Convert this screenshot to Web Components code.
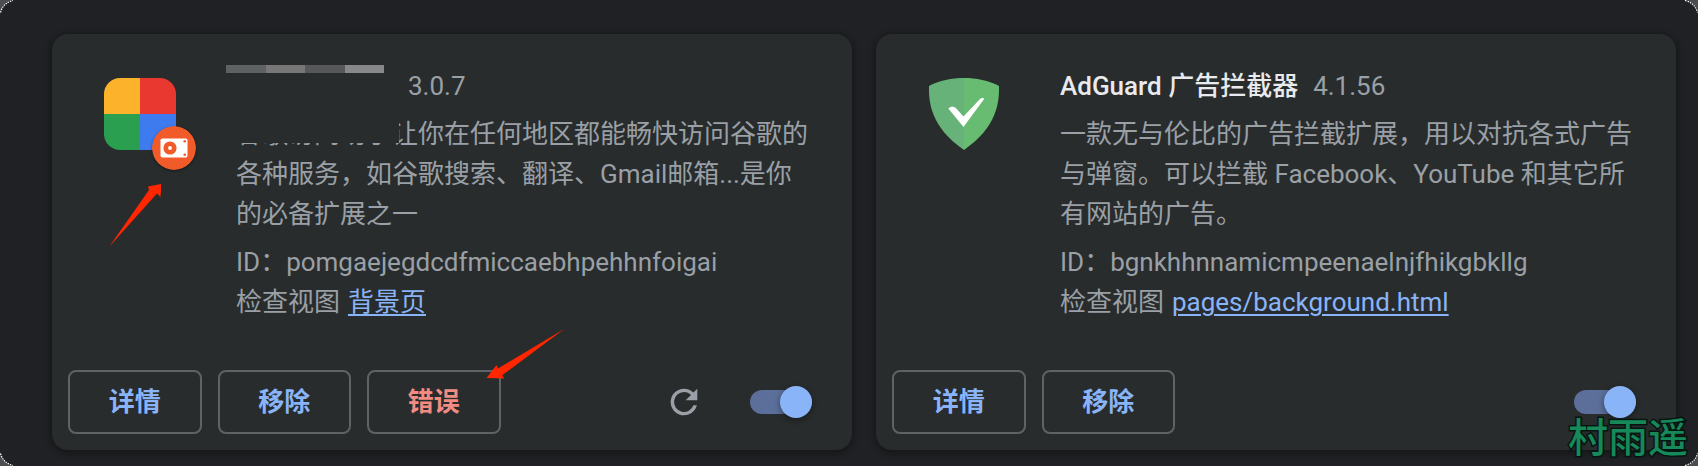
<!DOCTYPE html>
<html lang="zh-CN">
<head>
<meta charset="utf-8">
<title>扩展程序</title>
<style>
body{margin:0;width:1698px;height:466px;overflow:hidden;background:#4b4e50;font-family:Roboto,"Noto Sans CJK SC",sans-serif}
</style>
</head>
<body>
<extensions-page></extensions-page>
<script>
function define(name, html){
  const t=document.createElement('template');t.innerHTML=html;
  customElements.define(name,class extends HTMLElement{
    constructor(){super();this.attachShadow({mode:'open'}).appendChild(t.content.cloneNode(true));}
  });
}
define('action-button',`<style>
:host{display:flex;box-sizing:border-box;width:133.500px;height:64px;border:2px solid #5f6365;border-radius:8px;align-items:center;justify-content:center;color:#8ab4f8;font-size:26px;font-weight:700;line-height:40px}
:host([danger]){color:#f28b82}
</style><slot></slot>`);
define('toggle-switch',`<style>
:host{display:flex;align-items:center;justify-content:flex-end;width:62px;height:24px;border-radius:12px;background:#5b6f9a}
i{width:32px;height:32px;border-radius:50%;background:#8ab4f8;box-shadow:0 2px 6px rgba(0,0,0,.4);flex:none}
</style><i></i>`);
define('reload-icon',`<style>:host{display:block;width:40px;height:40px}svg{display:block}</style>
<svg width="40" height="40" viewBox="0 0 24 24" fill="#9aa0a6"><path d="M17.65 6.35A7.958 7.958 0 0 0 12 4a8 8 0 1 0 7.73 10h-2.08A5.99 5.99 0 1 1 12 6c1.66 0 3.14.69 4.22 1.78L13 11h7V4z"/></svg>`);
define('tiles-icon',`<style>
:host{display:block;position:relative;width:72px;height:72px}
.g{display:grid;grid-template-columns:1fr 1fr;grid-template-rows:1fr 1fr;width:72px;height:72px;border-radius:16px;overflow:hidden}
svg{position:absolute;left:48px;top:48px;border-radius:50%;box-shadow:0 1px 3px rgba(0,0,0,.4)}
</style><div class="g"><b style="background:#fdb22b"></b><b style="background:#e8382f"></b><b style="background:#2b9f50"></b><b style="background:#3d7bee"></b></div>
<svg width="44" height="44" viewBox="0 0 44 44"><circle cx="22" cy="22" r="22" fill="#f15a29"/><rect x="8.5" y="12.5" width="27" height="19" rx="1.8" fill="#fff"/><circle cx="18" cy="22" r="6.6" fill="#f15a29"/><circle cx="18" cy="22" r="1.9" fill="#fff"/><circle cx="32.7" cy="15.3" r="1.3" fill="#f15a29"/><circle cx="32.7" cy="28.7" r="1.3" fill="#f15a29"/></svg>`);
define('shield-icon',`<style>:host{display:block;width:72px;height:72px}svg{display:block}</style>
<svg width="72" height="72" viewBox="0 0 72 72"><path d="M36 0C24 0 11 2.600 1 8C1 19-.5 47 36 72Z" fill="#67b279"/><path d="M36 0C48 0 61 2.600 71 8C71 19 72.500 47 36 72Z" fill="#68bc71"/><path d="M35.500 49 20.300 30.500C23 28 26 28.300 28.300 30.500L35.500 38.500 51.500 21.500C53.500 19.500 55.500 19.600 56.300 20.700Z" fill="#fff"/></svg>`);
define('red-arrow',`<style>:host{display:block;position:absolute}svg{display:block}</style>
<svg width="52" height="64" viewBox="0 0 52 64"><path d="M0 63 40 6 39 2.500 52.500 0 51.500 13 48 9.500Z" fill="#ff2600"/></svg>`);
define('extension-card',`<style>
:host{display:flex;flex-direction:column;box-sizing:border-box;width:800px;height:416px;border-radius:16px;background:#282c2d;box-shadow:0 2px 6px 2px rgba(0,0,0,.3);color:#9aa0a6;font-size:26px;line-height:40px}
.info{display:flex;height:320px;padding:32px 36px 0 52px;box-sizing:border-box}
.icon{width:132px;padding-top:12px;flex:none}
.text{width:580px;white-space:nowrap}
.head{display:flex;gap:15px;height:40px;color:#e8eaed;font-weight:500}
.v{color:#9aa0a6;font-weight:400}
.desc{margin-top:8px;height:120px}
.id{margin-top:8px}
.acts{display:flex;align-items:center;gap:16px;height:64px;padding:0 40px 0 16px;margin-top:16px}
.end{margin-left:auto;display:flex;align-items:center;gap:46px}
</style>
<div class="info"><div class="icon"><slot name="icon"></slot></div><div class="text">
<div class="head"><slot name="name"></slot><span class="v"><slot name="version"></slot></span></div>
<div class="desc"><slot name="desc"></slot></div>
<div class="id"><slot name="id"></slot></div>
<div><slot name="views"></slot></div></div></div>
<div class="acts"><slot name="action"></slot><div class="end"><slot name="control"></slot></div></div>`);
define('name-mosaic',`<style>
:host{display:flex;width:158px;height:8px;margin:-1px 9px 0 -10px}
i{height:8px;flex:1}</style><i style="background:#5f6263"></i><i style="background:#777777"></i><i style="background:#57585a"></i><i style="background:#868889"></i>`);
define('extensions-page',`<style>
:host{display:flex;position:relative;box-sizing:border-box;width:1698px;height:466px;padding:34px 22px 0 52px;gap:24px;border-radius:15px;background:#202124}
a{margin-left:1.500px;color:#8ab4f8;text-decoration:underline;text-decoration-thickness:2px;text-underline-offset:3px}
.mask{position:absolute;left:226px;top:112px;width:173px;height:31px;background:#282c2d}
.a1{left:109px;top:184px}
.a2{left:486px;top:328px}
.corners{position:absolute;left:0;top:0}
.mark{position:absolute;left:1568px;top:406px;font:500 40px/58px "Noto Sans CJK SC",sans-serif;color:#16885a;-webkit-text-stroke:3px #06150f;paint-order:stroke fill;white-space:nowrap}
</style>
<extension-card>
<tiles-icon slot="icon"></tiles-icon>
<name-mosaic slot="name"></name-mosaic><span slot="version">3.0.7</span>
<div slot="desc">谷歌访问助手让你在任何地区都能畅快访问谷歌的<br>各种服务，如谷歌搜索、翻译、Gmail邮箱...是你<br>的必备扩展之一</div>
<span slot="id">ID：pomgaejegdcdfmiccaebhpehhnfoigai</span>
<span slot="views">检查视图 <a>背景页</a></span>
<action-button slot="action">详情</action-button><action-button slot="action">移除</action-button><action-button slot="action" danger>错误</action-button>
<reload-icon slot="control"></reload-icon><toggle-switch slot="control"></toggle-switch>
</extension-card>
<extension-card>
<shield-icon slot="icon"></shield-icon>
<span slot="name">AdGuard 广告拦截器</span><span slot="version">4.1.56</span>
<div slot="desc">一款无与伦比的广告拦截扩展，用以对抗各式广告<br>与弹窗。可以拦截 Facebook、YouTube 和其它所<br>有网站的广告。</div>
<span slot="id">ID：bgnkhhnnamicmpeenaelnjfhikgbkllg</span>
<span slot="views">检查视图 <a>pages/background.html</a></span>
<action-button slot="action">详情</action-button><action-button slot="action">移除</action-button>
<toggle-switch slot="control"></toggle-switch>
</extension-card>
<div class="mask"></div>
<red-arrow class="a1"></red-arrow>
<svg class="a2" style="position:absolute" width="80" height="52" viewBox="0 0 80 52"><path d="M79 0.500 12 40.500 10.500 37 0.500 50 18 50.500 16.500 47Z" fill="#ff2600"/></svg>
<svg class="corners" width="1698" height="466" fill="none" stroke="#fff" stroke-width="1.200" stroke-dasharray="1.500 1"><path d="M.5 12.500Q3 3 13 .5M1685 .5Q1695 3 1697.500 12.500M.5 453.500Q3 463 13 465.500M1685 465.500Q1695 463 1697.500 453.500"/></svg>
<div class="mark">村雨遥</div>`);
</script>
</body>
</html>
